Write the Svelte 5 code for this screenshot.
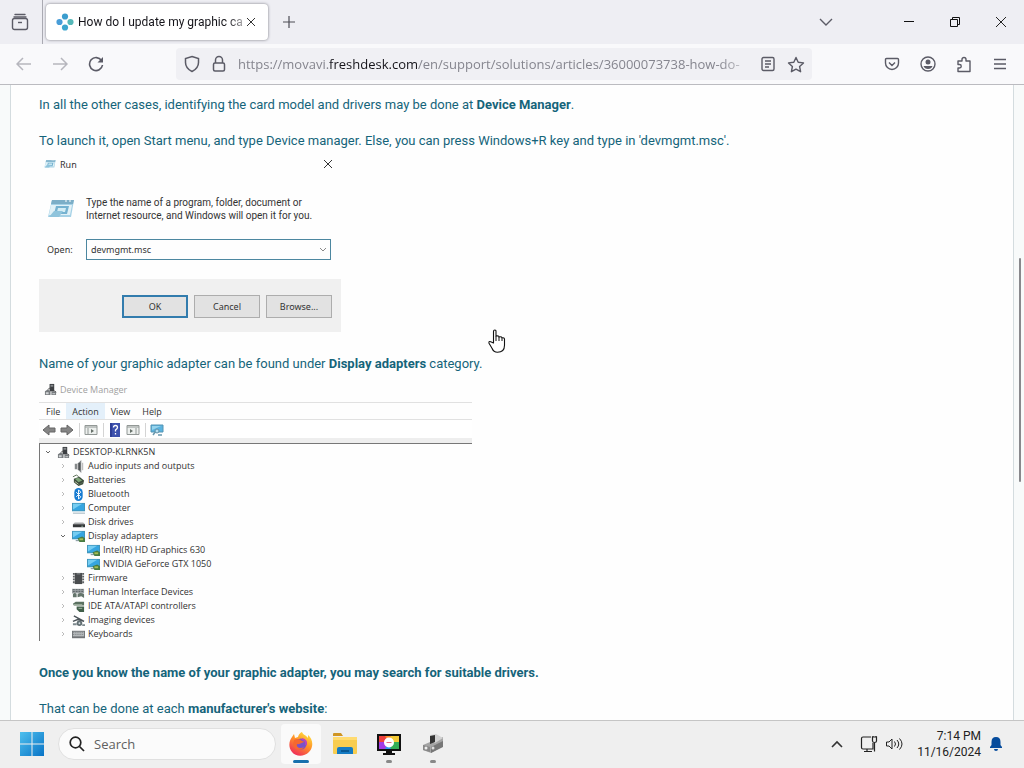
<script>
  let search = $state('');
  let command = $state('devmgmt.msc');
  const devices = [
    { name: 'DESKTOP-KLRNK5N', icon: 'pc', level: 0, open: true },
    { name: 'Audio inputs and outputs', icon: 'audio', level: 1 },
    { name: 'Batteries', icon: 'battery', level: 1 },
    { name: 'Bluetooth', icon: 'bluetooth', level: 1 },
    { name: 'Computer', icon: 'monitor', level: 1 },
    { name: 'Disk drives', icon: 'disk', level: 1 },
    { name: 'Display adapters', icon: 'display', level: 1, open: true },
    { name: 'Intel(R) HD Graphics 630', icon: 'display', level: 2, leaf: true },
    { name: 'NVIDIA GeForce GTX 1050', icon: 'display', level: 2, leaf: true },
    { name: 'Firmware', icon: 'chip', level: 1 },
    { name: 'Human Interface Devices', icon: 'hid', level: 1 },
    { name: 'IDE ATA/ATAPI controllers', icon: 'ide', level: 1 },
    { name: 'Imaging devices', icon: 'imaging', level: 1 },
    { name: 'Keyboards', icon: 'keyboard', level: 1 }
  ];
</script>

{#snippet deviceIcon(kind)}
  <svg class="device-icon" viewBox="0 0 14 14" aria-hidden="true">
    {#if kind === 'pc'}
      <path d="M6 1h5v8H6z" fill="#3c3f42" /><path d="M7 2h3v2H7z" fill="#85898c" />
      <path d="M1 9l3-2 3 2v4H1zM8 9h5v4H8z" fill="#777b7e" /><path d="M2 10h3v2H2zM9 11h3v1H9z" fill="#d1d4d6" /><path d="M4 7l3-2M11 8l2 2" stroke="#555" />
    {:else if kind === 'audio'}
      <path d="M3 4h3l4-4v14L6 10H3z" fill="#85898b" /><path d="M6 4v6" stroke="#ccc" /><path d="M8 3v8" stroke="#4f5355" stroke-width="2" /><path d="M11.500 3v8" stroke="#aaa" />
    {:else if kind === 'battery'}
      <path d="M2 5l6-2 5 4-1 4-5 2-5-4z" fill="#3b4a3c" /><path d="M3 5l4-1 4 3-4 2z" fill="#7fa678" /><path d="M1 3l4-2 3 3M8 11l4-2" stroke="#576b52" fill="none" /><path d="M3 8l4 3" stroke="#c4d1a6" />
    {:else if kind === 'bluetooth'}
      <rect x="2.500" y="0" width="9" height="14" rx="4.500" fill="#167bd2" /><path d="M4.500 4.500l5 5L7 12V2l2.500 2.500-5 5" fill="none" stroke="#fff" />
    {:else if kind === 'monitor' || kind === 'display'}
      <path d="M0 1h14v9H0z" fill="#4294b8" /><path d="M1 2h12v7H1z" fill="#36a5e0" /><path d="M1 2h10L1 8z" fill="#75cdf2" />
      {#if kind === 'monitor'}<path d="M1 12h13" stroke="#98adb9" />{:else}<path d="M4 11h4v1H4z" fill="#718992" /><path d="M6 9l5-2 3 2v4H8z" fill="#477a42" /><path d="M8 9h4v2H8z" fill="#a6bd53" />{/if}
    {:else if kind === 'disk'}
      <path d="M3 7h9l2 2v3H1V9z" fill="#a7a9ab" /><path d="M1 9h13v3H1z" fill="#343638" /><path d="M10 11h2" stroke="#92b3a0" />
    {:else if kind === 'chip'}
      <path d="M3 1h8v12H3z" fill="#494c4e" /><path d="M1 2h2M11 2h2M1 5h2M11 5h2M1 8h2M11 8h2M1 11h2M11 11h2" stroke="#5e6264" stroke-width="2" /><path d="M5 2h4" stroke="#929799" />
    {:else if kind === 'hid'}
      <path d="M0 3h13v5H0z" fill="#9da3a5" /><path d="M1 4h11M1 6h11" stroke="#565d60" stroke-dasharray="2 1" /><path d="M1 12V9q2-3 4 0v3zm5 0V9q3-3 7 0v4l-3-2z" fill="#64746b" />
    {:else if kind === 'ide'}
      <path d="M1 4l3-2h9v4H2z" fill="#5b7161" /><path d="M5 7h8v6H8l-3-3z" fill="#415f4a" /><path d="M2 5h9M7 9h4" stroke="#a5b9a4" />
    {:else if kind === 'imaging'}
      <path d="M2 2l11 6M1 8l5-2 7 2" stroke="#4d555a" stroke-width="1.500" fill="none" /><circle cx="8" cy="10" r="3" fill="#626f73" /><circle cx="8" cy="10" r="1" fill="#d2dce0" /><path d="M1 11h4M11 12h3" stroke="#7d898e" stroke-width="2" />
    {:else}
      <path d="M0 3h14v8H0z" fill="#707477" /><path d="M1 4h12v5H1z" fill="#b5b9bb" /><path d="M1 5h12M1 7h12" stroke="#7c8083" stroke-dasharray="1 1" />
    {/if}
  </svg>
{/snippet}

{#snippet runIcon()}
  <svg viewBox="0 0 28 22" aria-hidden="true">
    <path d="M5 2h22l-3 17H1z" fill="#a5d1e6" /><path d="M5 2h22l-1 4H4z" fill="#7caec7" /><path d="M4 7h21l-2 10H2z" fill="#e1f1f7" />
    <path d="M9 8h13l-2 8H7z" fill="#75b2d0" /><path d="M11 10h8l-1 4h-8z" fill="#d4edf5" /><path d="M2 19l5-6h9l-4 6z" fill="#8fc4dc" /><path d="M18 3h2m2 0h2" stroke="#fff" />
  </svg>
{/snippet}

<div class="screen">
  <header class="tabs">
    <button class="plain recent" aria-label="Recent browsing">
      <svg width="18" height="18" viewBox="0 0 18 18" fill="none" stroke="#5b5b66" stroke-width="1.400"><path d="M4 1.500h10M3 4h12" stroke-linecap="round" /><rect x="1.500" y="5.500" width="15" height="11" rx="2" /><path d="M7 9.500h4" /></svg>
    </button>
    <div class="tab">
      <svg width="18" height="18" viewBox="0 0 18 18" aria-hidden="true"><circle cx="9" cy="3.500" r="3.100" fill="#3b9dce" /><circle cx="3.500" cy="9" r="3.100" fill="#489dd8" /><circle cx="14.500" cy="9" r="3.100" fill="#55b8b9" /><circle cx="9" cy="14.500" r="3.100" fill="#3ca6ce" /></svg>
      <span class="tab-title">How do I update my graphic ca</span>
      <button class="plain" aria-label="Close tab"><svg width="10" height="10" viewBox="0 0 10 10" stroke="#333" fill="none"><path d="M1 1l8 8M9 1L1 9" /></svg></button>
    </div>
    <button class="plain new-tab" aria-label="New tab"><svg width="14" height="14" viewBox="0 0 14 14" stroke="#4c4c55" fill="none" stroke-width="1.200"><path d="M7 1v12M1 7h12" /></svg></button>
    <div class="window-controls">
      <button class="plain all-tabs" aria-label="List all tabs"><svg width="14" height="14" viewBox="0 0 14 14" fill="none" stroke="#5b5b66" stroke-width="1.400"><path d="M1 4l6 6 6-6" /></svg></button>
      <button class="plain" aria-label="Minimize"><svg width="12" height="12" viewBox="0 0 12 12" stroke="#111"><path d="M1 5.500h10" /></svg></button>
      <button class="plain" aria-label="Restore"><svg width="12" height="12" viewBox="0 0 12 12" fill="none" stroke="#111"><path d="M1.500 3.500h7v7h-7zM3.500 3V1.500h7v7H9" /></svg></button>
      <button class="plain" aria-label="Close window"><svg width="12" height="12" viewBox="0 0 12 12" stroke="#222"><path d="M1 1l10 10M11 1L1 11" /></svg></button>
    </div>
  </header>

  <nav class="navigation" aria-label="Browser">
    <div class="nav-buttons">
      <button class="plain" aria-label="Back" disabled><svg width="16" height="14" viewBox="0 0 16 14" fill="none" stroke="#b6b6bd" stroke-width="1.500"><path d="M15 7H1M7 1L1 7l6 6" /></svg></button>
      <button class="plain" aria-label="Forward" disabled><svg width="16" height="14" viewBox="0 0 16 14" fill="none" stroke="#b6b6bd" stroke-width="1.500"><path d="M1 7h14M9 1l6 6-6 6" /></svg></button>
      <button class="plain" aria-label="Reload"><svg width="16" height="16" viewBox="0 0 16 16" fill="none" stroke="#5b5b66" stroke-width="1.600"><path d="M13.500 4.500A6.500 6.500 0 1 0 14.500 9" /><path d="M15 1v5.500H9.500z" fill="#5b5b66" stroke="none" /></svg></button>
    </div>
    <div class="address">
      <svg width="16" height="18" viewBox="0 0 16 18" fill="none" stroke="#5b5b66" stroke-width="1.500" aria-hidden="true"><path d="M8 1.500l6.500 2v4c0 4-2.500 7-6.500 9-4-2-6.500-5-6.500-9v-4z" /></svg>
      <svg width="14" height="18" viewBox="0 0 14 18" fill="none" stroke="#5b5b66" stroke-width="1.500" aria-hidden="true"><rect x="1.500" y="8" width="11" height="8" rx="1.500" /><path d="M3.500 8V5a3.500 3.500 0 0 1 7 0v3" /></svg>
      <div class="url">https://movavi.<b>freshdesk.com</b>/en/support/solutions/articles/36000073738-how-do-</div>
      <button class="plain" aria-label="Reader view"><svg width="14" height="16" viewBox="0 0 14 16" fill="none" stroke="#5b5b66" stroke-width="1.400"><rect x="1" y="1.500" width="12" height="13" rx="1.500" /><path d="M4 5h6M4 8h6M4 11h4" /></svg></button>
      <button class="plain" aria-label="Bookmark this page"><svg width="18" height="17" viewBox="0 0 18 17" fill="none" stroke="#5b5b66" stroke-width="1.400" stroke-linejoin="round"><path d="M9 1.500l2.200 4.800 5.300.6-3.900 3.600 1 5.200L9 13.100l-4.600 2.600 1-5.200-3.900-3.600 5.300-.6z" /></svg></button>
    </div>
    <div class="extensions">
      <button class="plain" aria-label="Save to Pocket"><svg width="16" height="16" viewBox="0 0 16 16" fill="none" stroke="#5b5b66" stroke-width="1.400"><path d="M2.500 2.500h11q1 0 1 1V7a6.500 6.500 0 0 1-13 0V3.500q0-1 1-1zM5 6.500l3 3 3-3" /></svg></button>
      <button class="plain" aria-label="Account"><svg width="16" height="16" viewBox="0 0 16 16"><circle cx="8" cy="8" r="7" fill="none" stroke="#5b5b66" stroke-width="1.400" /><circle cx="8" cy="6" r="2.500" fill="#5b5b66" /><path d="M3.500 10h9Q11.500 13 8 13t-4.500-3z" fill="#5b5b66" /></svg></button>
      <button class="plain" aria-label="Extensions"><svg width="16" height="17" viewBox="0 0 16 17" fill="none" stroke="#5b5b66" stroke-width="1.400" stroke-linejoin="round"><path d="M2 5h4V3.500a2 2 0 0 1 4 0V5h4v10.500H2V12h1.500a1.700 1.700 0 0 0 0-3.500H2z" /></svg></button>
      <button class="plain" aria-label="Open application menu"><svg width="14" height="14" viewBox="0 0 14 14" stroke="#5b5b66" stroke-width="1.300"><path d="M1 2.500h12M1 7h12M1 11.500h12" /></svg></button>
    </div>
  </nav>

  <main class="viewport">
    <article>
      <p>In all the other cases, identifying the card model and drivers may be done at <strong>Device Manager</strong>.</p>
      <p>To launch it, open Start menu, and type Device manager. Else, you can press Windows+R key and type in 'devmgmt.msc'.</p>

      <section class="run" aria-label="Run">
        <header><span class="small-run">{@render runIcon()}</span><span>Run</span><button class="plain" aria-label="Close Run"><svg width="10" height="10" viewBox="0 0 10 10" stroke="#333"><path d="M1 1l8 8M9 1L1 9" /></svg></button></header>
        <div class="run-message"><span class="large-run">{@render runIcon()}</span><span>Type the name of a program, folder, document or<br />Internet resource, and Windows will open it for you.</span></div>
        <div class="run-field"><label for="command">Open:</label><div class="combo"><input id="command" bind:value={command} /><button class="plain" aria-label="Show command history"><svg width="8" height="6" viewBox="0 0 8 6" fill="none" stroke="#888"><path d="M1 1l3 3 3-3" /></svg></button></div></div>
        <footer><button class="primary">OK</button><button>Cancel</button><button>Browse...</button></footer>
      </section>

      <p class="adapter-text">Name of your graphic adapter can be found under <strong>Display adapters</strong> category.</p>

      <section class="manager" aria-label="Device Manager">
        <header>{@render deviceIcon('pc')}<span>Device Manager</span></header>
        <div class="menu"><button>File</button><button class="selected">Action</button><button>View</button><button>Help</button></div>
        <div class="tools">
          <button class="plain" aria-label="Back"><svg width="14" height="14" viewBox="0 0 14 14"><path d="M1 7l6-5v3h6v4H7v3z" fill="#858585" stroke="#666" /></svg></button>
          <button class="plain" aria-label="Forward"><svg width="14" height="14" viewBox="0 0 14 14"><path d="M13 7L7 2v3H1v4h6v3z" fill="#858585" stroke="#666" /></svg></button>
          <i></i>
          <button class="plain" aria-label="Console tree"><svg width="14" height="14" viewBox="0 0 14 14"><path d="M1 2.500h12v9H1z" fill="#edf0ee" stroke="#929896" /><path d="M1 4h12M4 5v6" stroke="#929896" /><path d="M7 6l3 2-3 2z" fill="#667069" /></svg></button>
          <i></i>
          <button class="plain" aria-label="Help"><svg width="14" height="14" viewBox="0 0 14 14"><rect x="2" y="0" width="10" height="14" fill="#3d51ad" /><path d="M3 0v14" stroke="#202c81" /><path d="M5.500 4.500q0-2 2-2t2 2q0 1-2 2.500v1.500M7.500 10v1.500" fill="none" stroke="#fff" stroke-width="1.300" /></svg></button>
          <button class="plain" aria-label="Properties"><svg width="14" height="14" viewBox="0 0 14 14"><path d="M1 2.500h12v9H1z" fill="#edf0ee" stroke="#929896" /><path d="M1 4h12M10 5v6" stroke="#929896" /><path d="M4 6l3 2-3 2z" fill="#667069" /></svg></button>
          <i></i>
          <button class="plain" aria-label="Scan for hardware changes"><svg width="14" height="14" viewBox="0 0 14 14"><path d="M1 2h12v7H1z" fill="#5bb3df" stroke="#5494b3" /><path d="M2 3h9L2 7z" fill="#96d4ed" /><path d="M3 12l3-4M8 12h4" stroke="#6998ad" stroke-width="1.500" /><circle cx="7" cy="8" r="2" fill="#b6dff1" stroke="#6091a9" /></svg></button>
        </div>
        <ul class="tree">
          {#each devices as device}
            <li class="level-{device.level}">
              <svg class="twisty" width="6" height="6" viewBox="0 0 6 6" fill="none" aria-hidden="true">{#if device.open}<path d="M1 2l2 2 2-2" stroke="#666" />{:else if !device.leaf}<path d="M2 1l2 2-2 2" stroke="#bbb" />{/if}</svg>
              {@render deviceIcon(device.icon)}<span>{device.name}</span>
            </li>
          {/each}
        </ul>
      </section>

      <p><strong>Once you know the name of your graphic adapter, you may search for suitable drivers.</strong></p>
      <p>That can be done at each <strong>manufacturer's website</strong>:</p>
    </article>
    <div class="scrollbar"><div class="thumb"></div></div>
  </main>

  <footer class="taskbar">
    <button class="plain start" aria-label="Start"><svg width="24" height="24" viewBox="0 0 24 24"><defs><linearGradient id="win" gradientUnits="userSpaceOnUse" x1="0" y1="0" x2="24" y2="24"><stop stop-color="#4ec0ee" /><stop offset="1" stop-color="#0873c6" /></linearGradient></defs><path d="M0 0h11.500v11.500H0zM12.500 0H24v11.500H12.500zM0 12.500h11.500V24H0zM12.500 12.500H24V24H12.500z" fill="url(#win)" /></svg></button>
    <label class="search"><svg width="16" height="16" viewBox="0 0 16 16" fill="none" stroke="#222" stroke-width="1.700" aria-hidden="true"><circle cx="6.500" cy="6.500" r="5.300" /><path d="M10.500 10.500L15 15" /></svg><input type="text" aria-label="Search" placeholder="Search" bind:value={search} /></label>
    <div class="apps">
      <button class="plain app active" aria-label="Firefox"><svg width="24" height="24" viewBox="0 0 24 24"><defs><linearGradient id="fire" x1=".8" y1="0" x2=".2" y2="1"><stop stop-color="#ffe640" /><stop offset=".45" stop-color="#ff9129" /><stop offset="1" stop-color="#ef245e" /></linearGradient></defs><path d="M3 5l2-3 1 4 3-1c1-4 4-5 4-5 1 3 4 3 6 6V3c5 4 6 12 1 17-5 5-13 5-17 0-4-5-3-11 0-15z" fill="url(#fire)" /><circle cx="12" cy="12" r="5.500" fill="#7952c9" /><path d="M5 8c3-2 6-1 8 1l3 1c-3 0-5 3-8 2-1 4 4 5 7 3-2 4-10 4-11-3z" fill="#f6682f" /><path d="M13 7q5 1 4 6" stroke="#bb43bd" stroke-width="2" fill="none" /></svg></button>
      <button class="plain app" aria-label="File Explorer"><svg width="26" height="24" viewBox="0 0 26 24"><path d="M1 2q0-1 1-1h7l2 3H1z" fill="#cf9524" /><path d="M1 5h23q1 0 1 1v15q0 1-1 1H2q-1 0-1-1z" fill="#f8cd50" /><path d="M1 5h24v3H1z" fill="#ffdb70" /><path d="M5 22v-5q0-2 2-2h12q2 0 2 2v5z" fill="#147bc3" /><path d="M9 19h8" stroke="#075995" stroke-width="2" /></svg></button>
      <button class="plain app running" aria-label="Screen recorder"><svg width="26" height="24" viewBox="0 0 26 24"><path d="M1 2h24v17H1z" fill="#111" /><path d="M3 4h10v6H3z" fill="#ed413f" /><path d="M3 10h10v7H3z" fill="#a13be4" /><path d="M13 4h10v6H13z" fill="#f3c936" /><path d="M13 10h10v7H13z" fill="#35ad55" /><path d="M9 4h6l-2 6z" fill="#ff8c27" /><path d="M9 17h6l-2-7z" fill="#2b99e8" /><circle cx="13" cy="10.500" r="5" fill="#fff" /><path d="M10.500 10.500h5" stroke="#e46e7d" /><path d="M10 19h6v2h3v2H7v-2h3z" fill="#111" /></svg></button>
      <button class="plain app running" aria-label="Device utility"><svg width="24" height="24" viewBox="0 0 24 24"><path d="M2 13l7-3 13-5v9l-12 7-8-3z" fill="#a5a5a5" /><path d="M9 3l6-1 7 4-8 5-5-2z" fill="#d2d2d2" /><path d="M9 4l5-1v7l-5 2z" fill="#333" /><path d="M10 15l12-6v6l-12 6z" fill="#777" /><path d="M2 13l7 2v5l-7-2z" fill="#888" /><circle cx="5" cy="16" r="1.500" fill="#eee" /><circle cx="12" cy="16" r="1.500" fill="#ddd" /></svg></button>
    </div>
    <div class="tray">
      <button class="plain" aria-label="Show hidden icons"><svg width="12" height="8" viewBox="0 0 12 8" fill="none" stroke="#333" stroke-width="1.600"><path d="M1 7l5-5 5 5" /></svg></button>
      <button class="plain network" aria-label="Network"><svg width="18" height="18" viewBox="0 0 18 18" fill="none" stroke="#222" stroke-width="1.200"><path d="M11 2H3Q1.500 2 1.500 3.500v9Q1.500 14 3 14h10V8M7 14v2.500M4 16.500h8" /><path d="M12.500 2h4v4q0 1.500-2 1.500t-2-1.500zM13 1v1M16 1v1M14.500 7.500v9" /></svg></button>
      <button class="plain volume" aria-label="Volume"><svg width="18" height="16" viewBox="0 0 18 16" fill="none" stroke="#222"><path d="M1.500 6H4l3-3v10l-3-3H1.500zM9.500 5.500q2 2.500 0 5M12 4q3.500 4 0 8M14.500 2.500q5 5.500 0 11" /></svg></button>
      <div class="clock"><time>7:14 PM</time><time>11/16/2024</time></div>
      <button class="plain" aria-label="Notifications"><svg width="14" height="16" viewBox="0 0 14 16" fill="#054b9c"><path d="M1 12V11l1.500-2V6q0-5 4.500-5t4.500 5v3L13 11v1zM5 13h4q0 2-2 2t-2-2z" /></svg></button>
    </div>
  </footer>
  <svg class="cursor" width="18" height="25" viewBox="0 0 18 25" aria-hidden="true"><path d="M5.500 14V2.500q0-1.500 1.300-1.500T8 2.500V7q3-.5 3 1 2.500-.7 3 .8 2.500-.5 2.500 1.500v6q0 7-7 7-4 0-5.500-4l-3-5q-.5-2.500 1.700-1.500z" fill="#fff" stroke="#111" stroke-width="1.100" stroke-linejoin="round" /><path d="M8 7v5M11 8v4M14 9v3" stroke="#111" /></svg>
</div>

<style>
  :global(body) { margin: 0; }
  * { box-sizing: border-box; }
  .screen { display: flex; flex-direction: column; height: 100vh; overflow: hidden; position: relative; background: #fff; color: #222; font: 12px "Open Sans", "Noto Sans", sans-serif; }
  button, input { font: inherit; color: inherit; }
  svg { display: block; flex-shrink: 0; }
  .plain { display: grid; place-items: center; padding: 0; border: 0; background: none; }
  .tabs { display: flex; flex: 0 0 44px; background: #eeeef3; align-items: center; }
  .recent { width: 43px; height: 44px; padding-right: 3px; border-right: 1px solid #aaaab2; }
  .tab { display: flex; align-items: center; gap: 4px; min-width: 222px; height: 36px; margin-left: 3px; padding: 0 12px 0 10px; background: #fff; border-radius: 4px; box-shadow: 0 0 3px #777781; color: #15141a; font-family: Roboto, sans-serif; }
  .tab-title { flex: 1; white-space: nowrap; mask-image: linear-gradient(to right, #000 90%, #0005); }
  .tab .plain { margin-left: -2px; }
  .new-tab { width: 41px; height: 36px; }
  .window-controls { display: flex; margin-left: auto; }
  .window-controls button { width: 46px; height: 44px; }
  .window-controls .all-tabs { width: 46px; margin-right: 37px; }
  .navigation { display: flex; flex: 0 0 41px; align-items: center; background: #f9f9fb; border-bottom: 1px solid #bbbbc0; }
  .nav-buttons { display: flex; width: 176px; padding-left: 6px; }
  .nav-buttons button { width: 36px; height: 32px; }
  .address { flex: 1; min-width: 0; display: flex; align-items: center; height: 32px; gap: 12px; padding: 0 7px 0 8px; background: #f0f0f4; border-radius: 4px; }
  .url { flex: 1; overflow: hidden; white-space: nowrap; font-size: 13px; color: #85858e; mask-image: linear-gradient(to right, #000 94%, #0004); }
  .url b { font-weight: 400; color: #15141a; }
  .extensions { display: flex; width: 212px; padding-right: 6px; justify-content: flex-end; }
  .extensions button { width: 36px; height: 32px; }
  .viewport { flex: 1; min-height: 0; display: flex; overflow: hidden; background: #f8fafa; padding-left: 10px; }
  article { flex: 1; min-width: 0; padding: 11px 28px 0; border: solid #d4dcdf; border-width: 0 1px; background: #fefefe; color: #15647a; font: 13px/18px Roboto, sans-serif; }
  p { margin: 0 0 18px; }
  .run, .manager { color: #333; font: 9px/13px "Open Sans", sans-serif; }
  .run { width: 302px; margin-top: -19px; font-family: "Noto Sans", sans-serif; }
  .run header { display: flex; align-items: center; height: 30px; padding: 0 8px 0 5px; gap: 4px; }
  .run header button { margin-left: auto; }
  .small-run svg { width: 12px; height: 10px; }
  .large-run svg { width: 28px; height: 22px; }
  .run-message { display: flex; align-items: center; gap: 11px; height: 60px; padding-left: 8px; font: 10px/13px Roboto, sans-serif; }
  .run-field { display: flex; align-items: center; gap: 6px; height: 21px; padding: 0 10px 0 8px; }
  .run-field label { width: 33px; }
  .combo { display: flex; flex: 1; height: 21px; padding-right: 3px; border: 1px solid #4c87a0; }
  .combo input { flex: 1; min-width: 0; padding: 0 4px; border: 0; background: none; outline: 0; }
  .run footer { display: flex; justify-content: flex-end; align-items: center; gap: 6px; height: 53px; margin-top: 19px; padding: 2px 9px 0; background: #f0f0f0; }
  .run footer button { width: 66px; height: 23px; padding: 0; border: 1px solid #adadad; background: #e2e2e2; }
  .run footer .primary { border: 2px solid #327cad; }
  .adapter-text { margin: 23px 0 8px; }
  .manager { width: 433px; margin-bottom: 23px; }
  .manager header { display: flex; align-items: center; gap: 3px; height: 21px; padding: 0 0 4px 5px; color: #a0a0a0; }
  .device-icon { width: 13px; height: 13px; }
  .menu { display: flex; align-items: center; height: 18px; border: solid #e1e1e1; border-width: 1px 0; padding-left: 1px; }
  .menu button { height: 16px; padding: 0 6px; border: 0; background: none; line-height: 13px; }
  .menu .selected { background: #e4f0fa; }
  .tools { display: flex; align-items: center; gap: 4px; height: 24px; padding: 0 0 4px 3px; border-bottom: 1px solid #777; background: linear-gradient(#fff 80%, #eee 80%); }
  .tools i { width: 1px; height: 14px; margin-left: 1px; background: #d4d4d4; }
  .tree { list-style: none; margin: 0; padding: 1px 0 0 5px; border-left: 1px solid #777; }
  .tree li { display: flex; align-items: center; height: 14px; gap: 3px; line-height: 14px; }
  .twisty { margin-right: 3px; }
  .tree .level-1 { padding-left: 15px; }
  .tree .level-2 { padding-left: 30px; }
  .scrollbar { display: flex; justify-content: center; width: 10px; padding: 173px 0 0 2px; }
  .thumb { width: 2px; height: 224px; background: #88888c; border-radius: 1px; }
  .taskbar { display: flex; flex: 0 0 48px; align-items: center; background: #efefef; border-top: 1px solid #c5c5c5; padding: 0 21px 2px 20px; }
  .search { display: flex; align-items: center; gap: 9px; width: 218px; height: 32px; margin-left: 14px; padding: 0 10px; border: 1px solid #e0e0e0; border-radius: 16px; background: #fbfbfb; }
  .search input { min-width: 0; flex: 1; padding: 0; border: 0; outline: 0; background: none; font-size: 13px; }
  .search input::placeholder { color: #606060; opacity: 1; }
  .apps { display: flex; gap: 4px; margin-left: 5px; }
  .app { width: 40px; height: 40px; border-radius: 4px; position: relative; }
  .active { background: #fafafa; }
  .active::after, .running::after { content: ""; position: absolute; bottom: 1px; left: 50%; width: 16px; height: 3px; border-radius: 2px; background: #1770ad; transform: translateX(-50%); }
  .running::after { width: 6px; background: #888; }
  .tray { display: flex; align-items: center; margin-left: auto; }
  .network { margin-left: 17px; }
  .volume { margin-left: 7px; }
  .clock { width: 78px; margin-right: 8px; text-align: right; font: 12px/16px Roboto, sans-serif; }
  .clock time { display: block; }
  .cursor { position: absolute; left: 488px; top: 329px; }
</style>
